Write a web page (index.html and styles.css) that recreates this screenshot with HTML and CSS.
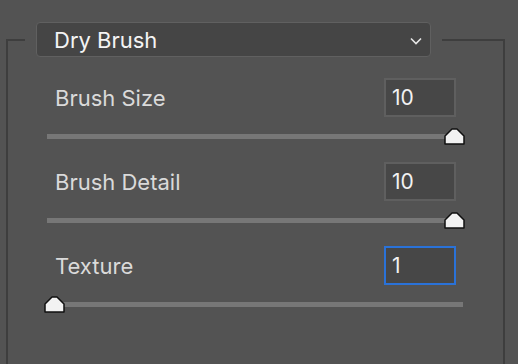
FILE: index.html
```html
<!DOCTYPE html>
<html lang="en">
<head>
    <meta charset="UTF-8">
    <meta name="viewport" content="width=device-width, initial-scale=1.0">
    <title>Dry Brush</title>
    <link rel="stylesheet" href="styles.css">
</head>
<body>

    <fieldset class="filter-group">
        <legend class="filter-legend">
            <div class="dropdown">
                <span>Dry Brush</span>
                <svg class="chevron" width="12" height="8" viewBox="0 0 12 8">
                    <path d="M1 1.5 L6 6.5 L11 1.5" fill="none" stroke="#e6e6e6" stroke-width="1.6"/>
                </svg>
            </div>
        </legend>

        <div class="param">
            <div class="param-head">
                <label for="size">Brush Size</label>
                <input type="text" id="size" class="num" value="10">
            </div>
            <div class="track">
                <svg class="thumb" style="left: 397px" width="21" height="17" viewBox="0 0 21 17">
                    <path d="M1 16 L1 8 L8 1 L13 1 L20 8 L20 16 Z" fill="#f2f2f2" stroke="#111" stroke-width="1.5" stroke-linejoin="round"/>
                </svg>
            </div>
        </div>

        <div class="param">
            <div class="param-head">
                <label for="detail">Brush Detail</label>
                <input type="text" id="detail" class="num" value="10">
            </div>
            <div class="track">
                <svg class="thumb" style="left: 397px" width="21" height="17" viewBox="0 0 21 17">
                    <path d="M1 16 L1 8 L8 1 L13 1 L20 8 L20 16 Z" fill="#f2f2f2" stroke="#111" stroke-width="1.5" stroke-linejoin="round"/>
                </svg>
            </div>
        </div>

        <div class="param">
            <div class="param-head">
                <label for="texture">Texture</label>
                <input type="text" id="texture" class="num focused" value="1">
            </div>
            <div class="track">
                <svg class="thumb" style="left: -3px" width="21" height="17" viewBox="0 0 21 17">
                    <path d="M1 16 L1 8 L8 1 L13 1 L20 8 L20 16 Z" fill="#f2f2f2" stroke="#111" stroke-width="1.5" stroke-linejoin="round"/>
                </svg>
            </div>
        </div>
    </fieldset>

</body>
</html>
```

FILE: styles.css
```css
html, body {
    margin: 0;
    padding: 0;
    background-color: #535353;
    overflow: hidden;
}
body {
    font-family: Inter, "Liberation Sans", Arial, sans-serif;
    height: 364px;
}
.filter-group {
    margin: 22px 0 0 6px;
    width: 499px;
    height: 420px;
    box-sizing: border-box;
    border: 2px solid #3e3e3e;
    border-bottom: none;
    padding: 21px 0 0 0;
}
.filter-legend {
    margin-left: 17px;
    padding: 0 11px;
}
.dropdown {
    width: 395px;
    height: 35px;
    box-sizing: border-box;
    display: flex;
    align-items: center;
    justify-content: space-between;
    padding: 0 8px 0 17px;
    background-color: #454545;
    border: 1px solid #606060;
    border-radius: 4px;
    color: #f4f4f4;
    font-size: 22px;
}
.chevron {
    margin-top: 2px;
}
.param {
    padding: 0 0 23px 39px;
}
.param-head {
    display: flex;
    align-items: center;
    justify-content: space-between;
    width: 409px;
    height: 39px;
    box-sizing: border-box;
    padding-left: 8px;
}
.param-head label {
    color: #dadada;
    font-size: 22px;
    padding-top: 1px;
}
.num {
    width: 72px;
    height: 39px;
    box-sizing: border-box;
    background-color: #474747;
    border: 2px solid #5f5f5f;
    color: #f2f2f2;
    font-family: inherit;
    font-size: 21px;
    padding: 0 0 0 6px;
    outline: none;
}
.num.focused {
    border-color: #2a72d8;
}
.track {
    position: relative;
    margin-top: 17px;
    width: 416px;
    height: 5px;
    background-color: #777777;
}
.thumb {
    position: absolute;
    top: -6px;
}
```
